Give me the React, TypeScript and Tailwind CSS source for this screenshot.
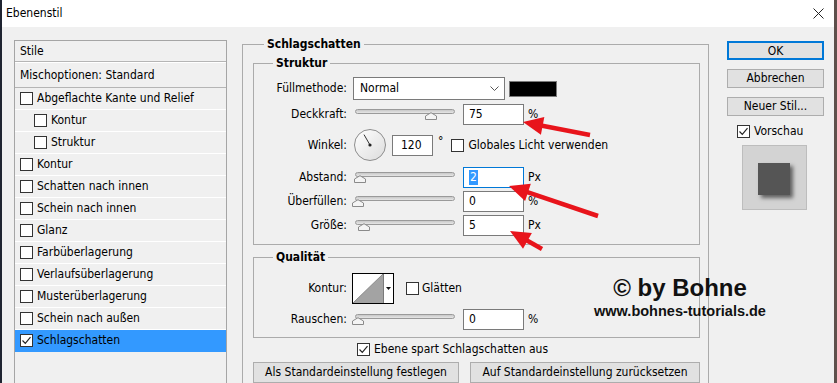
import React from "react";

const RED = "#e8141b";

const Check = ({ checked = false }: { checked?: boolean }) => (
  <span className="flex h-[13px] w-[13px] shrink-0 items-center justify-center border border-[#333] bg-white">
    {checked && (
      <svg width="11" height="11" viewBox="0 0 11 11">
        <path d="M1.5 5.5 L4.3 8.3 L9.5 2.2" stroke="#222" strokeWidth="1.2" fill="none" />
      </svg>
    )}
  </span>
);

const Slider = ({ thumb }: { thumb: number }) => (
  <div className="relative ml-[8px] h-[22px] w-[100px] shrink-0">
    <div className="absolute left-0 right-0 top-[6px] h-[5px] rounded-full border border-[#9a9a9a] bg-gradient-to-b from-[#c8c8c8] to-[#e6e6e6]" />
    <svg className="absolute top-[9px]" style={{ left: thumb }} width="12" height="8" viewBox="0 0 12 8">
      <path d="M0.5 7.5 V4 L6 0.7 L11.5 4 V7.5 Z" fill="#f4f4f4" stroke="#8a8a8a" />
    </svg>
  </div>
);

const Field = ({ value, unit, focus = false }: { value: string; unit: string; focus?: boolean }) => (
  <>
    <div
      className={`ml-[8px] flex h-[21px] w-[61px] shrink-0 items-center border bg-white pl-[5px] ${
        focus ? "border-[#0078d7]" : "border-[#7a7a7a]"
      }`}
    >
      {focus ? <span className="bg-[#3399ff] px-px text-white">{value}</span> : value}
    </div>
    <span className="ml-[4px]">{unit}</span>
  </>
);

const Label = ({ children }: { children: React.ReactNode }) => (
  <span className="w-[93px] shrink-0 text-right">{children}</span>
);

const Arrow = ({ from, to }: { from: [number, number]; to: [number, number] }) => {
  const [x1, y1] = from;
  const [x2, y2] = to;
  const len = Math.hypot(x2 - x1, y2 - y1);
  const ux = (x2 - x1) / len;
  const uy = (y2 - y1) / len;
  const bx = x2 - ux * 20;
  const by = y2 - uy * 20;
  const pts = `${x2},${y2} ${bx - uy * 9},${by + ux * 9} ${bx + uy * 9},${by - ux * 9}`;
  return (
    <g>
      <line x1={x1} y1={y1} x2={bx + ux * 3} y2={by + uy * 3} stroke={RED} strokeWidth={4.5} />
      <polygon points={pts} fill={RED} />
    </g>
  );
};

const styles = [
  { label: "Abgeflachte Kante und Relief" },
  { label: "Kontur", sub: true },
  { label: "Struktur", sub: true },
  { label: "Kontur" },
  { label: "Schatten nach innen" },
  { label: "Schein nach innen" },
  { label: "Glanz" },
  { label: "Farbüberlagerung" },
  { label: "Verlaufsüberlagerung" },
  { label: "Musterüberlagerung" },
  { label: "Schein nach außen" },
  { label: "Schlagschatten", checked: true },
];

export default function App() {
  return (
    <div className="relative flex h-[383px] w-[837px] flex-col overflow-hidden border-l-2 border-r-[3px] border-l-[#1f2431] border-r-[#5e504c] bg-[#f0f0f0] font-['DejaVu_Sans_Condensed','Liberation_Sans',sans-serif] text-[12px] leading-[15px] text-black">
      {/* title bar */}
      <div className="flex h-[27px] shrink-0 items-center justify-between bg-white pl-[4px] pr-[10px]">
        <span>Ebenenstil</span>
        <svg width="11" height="11" viewBox="0 0 11 11">
          <path d="M0.5 0.5 L10.5 10.5 M10.5 0.5 L0.5 10.5" stroke="#222" strokeWidth="1" />
        </svg>
      </div>

      <div className="flex flex-1">
        {/* styles list */}
        <div className="ml-[12px] mt-[13px] h-[400px] w-[213px] shrink-0 border border-[#a5a5a5]">
          <div className="flex h-[21px] items-center border-b border-[#b5b5b5] pl-[5px]">Stile</div>
          <div className="flex h-[26px] items-center border-b border-[#b5b5b5] border-t border-t-white pl-[5px]">
            Mischoptionen: Standard
          </div>
          {styles.map((s, i) => (
            <div
              key={i}
              className={`flex h-[22px] items-center gap-[4px] border-b ${
                s.checked ? "border-[#3399ff] bg-[#3399ff]" : "border-white"
              } ${s.sub ? "pl-[19px]" : "pl-[5px]"}`}
            >
              <Check checked={s.checked} />
              <span>{s.label}</span>
            </div>
          ))}
        </div>

        {/* Schlagschatten */}
        <fieldset className="ml-[15px] mt-[9px] h-[400px] w-[467px] shrink-0 border border-[#ababab] pl-[10px] pr-[8px]">
          <legend className="ml-[11px] px-[3px] font-bold leading-[16px]">Schlagschatten</legend>

          <fieldset className="mt-[3px] border border-[#ababab] pb-[8px] pt-[6px]">
            <legend className="ml-[19px] px-[3px] font-bold leading-[16px]">Struktur</legend>
            <div className="flex h-[23px] items-center">
              <Label>Füllmethode:</Label>
              <div className="ml-[6px] flex h-[23px] w-[152px] items-center justify-between border border-[#7a7a7a] bg-white pl-[6px] pr-[5px]">
                <span>Normal</span>
                <svg width="9" height="5" viewBox="0 0 9 5">
                  <path d="M0.5 0.5 L4.5 4.5 L8.5 0.5" stroke="#555" fill="none" />
                </svg>
              </div>
              <div className="ml-[4px] h-[16px] w-[48px] border border-[#7a7a7a] bg-black" />
            </div>
            <div className="mt-[3px] flex h-[22px] items-center">
              <Label>Deckkraft:</Label>
              <Slider thumb={70} />
              <Field value="75" unit="%" />
            </div>
            <div className="mt-[4px] flex h-[32px] items-center">
              <Label>Winkel:</Label>
              <svg className="ml-[7px] shrink-0" width="32" height="32" viewBox="0 0 32 32">
                <defs>
                  <linearGradient id="dial" x1="0" y1="0" x2="1" y2="1">
                    <stop offset="0" stopColor="#ffffff" />
                    <stop offset="1" stopColor="#dcdcdc" />
                  </linearGradient>
                </defs>
                <circle cx="16" cy="16" r="15.5" fill="url(#dial)" stroke="#8d8d8d" />
                <line x1="16" y1="16" x2="10" y2="5.6" stroke="#333" strokeWidth="1" />
                <circle cx="16" cy="16" r="1.6" fill="#222" />
              </svg>
              <div className="ml-[6px] flex h-[21px] w-[41px] items-center border border-[#7a7a7a] bg-white pl-[8px]">120</div>
              <span className="ml-[5px] self-start pt-[5px]">°</span>
              <span className="ml-[8px]">
                <Check />
              </span>
              <span className="ml-[4px]">Globales Licht verwenden</span>
            </div>
            <div className="mt-[5px] flex h-[22px] items-center">
              <Label>Abstand:</Label>
              <Slider thumb={-1} />
              <Field value="2" unit="Px" focus />
            </div>
            <div className="mt-[2px] flex h-[22px] items-center">
              <Label>Überfüllen:</Label>
              <Slider thumb={-3} />
              <Field value="0" unit="%" />
            </div>
            <div className="mt-[2px] flex h-[22px] items-center">
              <Label>Größe:</Label>
              <Slider thumb={3} />
              <Field value="5" unit="Px" />
            </div>
          </fieldset>

          <fieldset className="mt-[4px] border border-[#ababab] pb-[7px] pt-[7px]">
            <legend className="ml-[19px] px-[3px] font-bold leading-[16px]">Qualität</legend>
            <div className="flex h-[32px] items-center">
              <Label>Kontur:</Label>
              <div className="ml-[5px] flex h-[31px] w-[42px] border border-black bg-white">
                <svg width="30" height="29" viewBox="0 0 30 29" className="shrink-0">
                  <polygon points="0,29 30,0 30,29" fill="#a3a3a3" />
                  <line x1="0" y1="29" x2="30" y2="0" stroke="#8a8a8a" />
                </svg>
                <div className="flex flex-1 items-center justify-center border-l border-[#7a7a7a]">
                  <svg width="5" height="3" viewBox="0 0 5 3">
                    <polygon points="0,0 5,0 2.5,3" fill="#111" />
                  </svg>
                </div>
              </div>
              <span className="ml-[12px]">
                <Check />
              </span>
              <span className="ml-[3px]">Glätten</span>
            </div>
            <div className="mt-[4px] flex h-[22px] items-center">
              <Label>Rauschen:</Label>
              <Slider thumb={-3} />
              <Field value="0" unit="%" />
            </div>
          </fieldset>

          <div className="mt-[3px] flex h-[16px] items-center gap-[4px] pl-[104px]">
            <Check checked />
            <span>Ebene spart Schlagschatten aus</span>
          </div>
          <div className="mt-[5px] flex gap-[11px]">
            <button className="h-[21px] w-[206px] border border-[#adadad] bg-[#e1e1e1]">
              Als Standardeinstellung festlegen
            </button>
            <button className="h-[21px] w-[230px] border border-[#adadad] bg-[#e1e1e1]">
              Auf Standardeinstellung zurücksetzen
            </button>
          </div>
        </fieldset>

        {/* buttons column */}
        <div className="ml-[18px] mt-[14px] flex w-[97px] shrink-0 flex-col">
          <button className="h-[19px] border-2 border-[#0078d7] bg-[#e1e1e1] leading-[14px]">OK</button>
          <button className="mt-[9px] h-[19px] border border-[#adadad] bg-[#e1e1e1]">Abbrechen</button>
          <button className="mt-[9px] h-[19px] border border-[#adadad] bg-[#e1e1e1]">Neuer Stil...</button>
          <div className="mt-[8px] flex items-center gap-[4px] pl-[10px]">
            <Check checked />
            <span>Vorschau</span>
          </div>
          <div className="ml-[15px] mt-[6px] h-[65px] w-[65px] border border-[#bdbdbd] bg-[#d3d3d3] pl-[15px] pt-[17px]">
            <div className="h-[32px] w-[32px] bg-[#555555] shadow-[3px_3px_4px_rgba(0,0,0,0.55)]" />
          </div>
        </div>
      </div>

      {/* watermark */}
      <div className="absolute left-[588px] top-[274px] flex w-[180px] flex-col items-center font-['Liberation_Sans',sans-serif] font-bold text-[#111]">
        <span className="text-[24px] leading-[28px]">© by Bohne</span>
        <span className="text-[14.5px] leading-[18px]">www.bohnes-tutorials.de</span>
      </div>

      {/* red arrows */}
      <svg className="pointer-events-none absolute left-[-2px] top-0" width="837" height="383" viewBox="0 0 837 383">
        <Arrow from={[590, 135]} to={[523, 122]} />
        <Arrow from={[598, 216]} to={[509, 186]} />
        <Arrow from={[542, 249]} to={[510, 231]} />
      </svg>
    </div>
  );
}
